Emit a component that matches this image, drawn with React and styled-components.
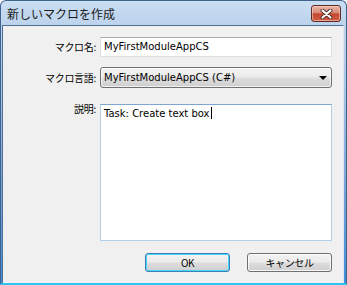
import styled, { createGlobalStyle } from "styled-components";

const GlobalStyle = createGlobalStyle`
 html, body {
  margin: 0;
  padding: 0;
  background: #ffffff;
 }
`;

const Window = styled.div`
 width: 347px;
 height: 285px;
 box-sizing: border-box;
 display: flex;
 flex-direction: column;
 border: 1px solid #3f638d;
 border-bottom: 2px solid #2ec6f0;
 border-radius: 6px 6px 0 0;
 padding: 0 2px 0 1px;
 background: linear-gradient(
  180deg,
  #cadef2 0px,
  #bcd3ec 24px,
  #a5c2e4 90px,
  #6f9fd6 200px,
  #3f8fd9 280px
 );
 font-family: "Noto Sans CJK JP", "Liberation Sans", sans-serif;
`;

const TitleBar = styled.div`
 height: 24px;
 display: flex;
 align-items: flex-start;
 justify-content: space-between;
 padding: 0 3px 0 5px;
`;

const Title = styled.span`
 font-size: 12px;
 line-height: 12px;
 margin-top: 7px;
 color: #1a1a1a;
`;

const CloseButton = styled.div`
 width: 28px;
 height: 15px;
 margin-top: 4px;
 border: 1px solid #5e2b27;
 border-radius: 3px;
 display: flex;
 align-items: center;
 justify-content: center;
 background: linear-gradient(
  180deg,
  #ecb4a6 0%,
  #d98c79 45%,
  #c5472f 52%,
  #cf5f42 100%
 );
 box-shadow: inset 0 0 0 1px rgba(255, 220, 210, 0.55);
`;

const Client = styled.div`
 flex: 1;
 display: flex;
 flex-direction: column;
 background: #f0f0f0;
 border: 1px solid #4f6f96;
 border-right-color: #dde5ee;
 border-bottom: none;
 padding: 11px 11px 0 0;
`;

const FieldRow = styled.div`
 display: grid;
 grid-template-columns: 93px 232px;
 column-gap: 4px;
 align-items: ${(p) => (p.$top ? "start" : "center")};
 margin-top: ${(p) => p.$gap || 0}px;
`;

const Label = styled.label`
 text-align: right;
 font-size: 10px;
 line-height: 12px;
 letter-spacing: -0.3px;
 color: #000;
 margin-top: ${(p) => (p.$top ? "-1px" : "0")};
`;

const TextInput = styled.div`
 height: 20px;
 box-sizing: border-box;
 border: 1px solid #dbdfe6;
 border-top-color: #abadb3;
 background: #fff;
 padding: 0 3px;
 font-family: "DejaVu Sans", Tahoma, sans-serif;
 font-size: 10px;
 line-height: 18px;
 color: #000;
`;

const ComboBox = styled.div`
 height: 21px;
 box-sizing: border-box;
 border: 1px solid #707070;
 border-radius: 3px;
 display: flex;
 align-items: center;
 justify-content: space-between;
 padding: 0 4px 0 3px;
 background: linear-gradient(
  180deg,
  #f4f4f4 0%,
  #ebebeb 48%,
  #dddddd 52%,
  #cfcfcf 100%
 );
 box-shadow: inset 0 0 0 1px rgba(255, 255, 255, 0.7);
 font-family: "DejaVu Sans", Tahoma, sans-serif;
 font-size: 10px;
 color: #000;
`;

const Arrow = styled.span`
 width: 0;
 height: 0;
 border-left: 4px solid transparent;
 border-right: 4px solid transparent;
 border-top: 4px solid #000;
 margin-top: 1px;
`;

const TextArea = styled.div`
 height: 137px;
 box-sizing: border-box;
 border: 1px solid #b5cfe7;
 border-top-color: #7fa6d3;
 background: #fff;
 padding: 2px 3px;
 font-family: "DejaVu Sans", Tahoma, sans-serif;
 font-size: 10px;
 line-height: 13px;
 color: #000;
`;

const Caret = styled.span`
 display: inline-block;
 width: 1px;
 height: 12px;
 background: #000;
 vertical-align: -2px;
 margin-left: 1px;
`;

const ButtonRow = styled.div`
 display: flex;
 justify-content: flex-end;
 gap: 17px;
 margin-top: 12px;
`;

const Button = styled.div`
 width: 85px;
 height: 19px;
 box-sizing: border-box;
 border: 1px solid ${(p) => (p.$default ? "#3c7fb1" : "#707070")};
 border-radius: 3px;
 display: flex;
 align-items: center;
 justify-content: center;
 background: linear-gradient(
  180deg,
  #f2f2f2 0%,
  #ebebeb 48%,
  #dddddd 52%,
  #cfcfcf 100%
 );
 box-shadow: inset 0 0 0 1px
  ${(p) => (p.$default ? "#48d5fb" : "rgba(255, 255, 255, 0.8)")};
 font-size: 10px;
 letter-spacing: -0.4px;
 color: #000;
`;

function CloseIcon() {
 return (
  <svg width="13" height="10" viewBox="0 0 13 10">
   <path
    d="M2.5 1.5 L10.5 8.5 M10.5 1.5 L2.5 8.5"
    stroke="#4a2a28"
    strokeWidth="4"
    strokeLinecap="round"
   />
   <path
    d="M2.5 1.5 L10.5 8.5 M10.5 1.5 L2.5 8.5"
    stroke="#ffffff"
    strokeWidth="2.2"
    strokeLinecap="round"
   />
  </svg>
 );
}

function App() {
 return (
  <>
   <GlobalStyle />
   <Window>
    <TitleBar>
     <Title>新しいマクロを作成</Title>
     <CloseButton>
      <CloseIcon />
     </CloseButton>
    </TitleBar>
    <Client>
     <FieldRow>
      <Label>マクロ名:</Label>
      <TextInput>MyFirstModuleAppCS</TextInput>
     </FieldRow>
     <FieldRow $gap={10}>
      <Label>マクロ言語:</Label>
      <ComboBox>
       <span>MyFirstModuleAppCS (C#)</span>
       <Arrow />
      </ComboBox>
     </FieldRow>
     <FieldRow $gap={16} $top>
      <Label $top>説明:</Label>
      <TextArea>
       Task: Create text box
       <Caret />
      </TextArea>
     </FieldRow>
     <ButtonRow>
      <Button $default>OK</Button>
      <Button>キャンセル</Button>
     </ButtonRow>
    </Client>
   </Window>
  </>
 );
}

export default App;
